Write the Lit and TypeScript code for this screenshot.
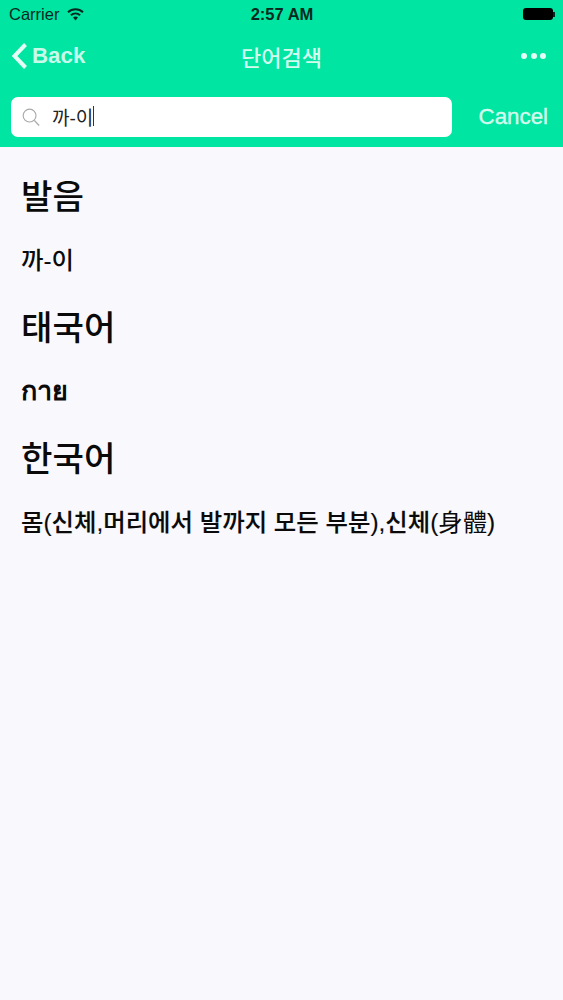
import { LitElement, html, css } from "lit";
import { customElement } from "lit/decorators.js";

@customElement("app-root")
export class AppRoot extends LitElement {
  static styles = css`
    :host { display: block; width: 563px; height: 1000px; background: #f9f8fc; font-family: "Liberation Sans", "Noto Sans CJK KR", sans-serif; overflow: hidden; color: #0a0a0a; }
    .header { background: #00e5a1; height: 147px; display: flex; flex-direction: column; }
    .status { height: 28px; display: grid; grid-template-columns: 1fr auto 1fr; align-items: center; padding: 0 8px 0 9px; color: #06281e; font-size: 16.5px; }
    .carrier { display: flex; align-items: center; gap: 8px; }
    .time { font-weight: 700; font-size: 16.5px; }
    .batt { justify-self: end; display: flex; align-items: center; }
    .batt i { display: block; width: 30px; height: 12px; background: #000; border-radius: 3px; }
    .batt b { display: block; width: 2px; height: 5px; background: #06281e; }
    .nav { height: 55px; display: grid; grid-template-columns: 1fr auto 1fr; align-items: center; padding: 0 11px; color: #d3fbee; }
    .back { display: flex; align-items: center; gap: 4px; font-size: 22.3px; font-weight: 700; color: #c8faea; }
    .title { font-size: 22px; font-weight: 500; }
    .more { justify-self: end; display: flex; gap: 3.5px; padding-right: 6px; }
    .more i { width: 6px; height: 6px; border-radius: 50%; background: #e4fdf5; }
    .searchrow { flex: 1; display: flex; align-items: flex-start; padding: 14px 15px 0 11px; }
    .field { width: 441px; height: 40px; background: #fff; border-radius: 7px; display: flex; align-items: center; padding: 0 10px 0 11px; gap: 12px; box-sizing: border-box; }
    .query { font-size: 19px; color: #222; display: flex; align-items: center; padding-bottom: 2px; }
    .caret { width: 1px; height: 20px; background: #333; }
    .cancel { margin-left: auto; font-size: 22.3px; color: #d3fbee; line-height: 40px; -webkit-text-stroke: 0.4px #d3fbee; }
    .content { padding: 18px 21px 0; display: flex; flex-direction: column; }
    h2 { margin: 0; font-size: 34.2px; font-weight: 500; line-height: 65.6px; }
    p { margin: -3px 0 3px; font-size: 24.4px; font-weight: 500; line-height: 65.6px; white-space: nowrap; }
    .strong { font-size: 24.4px; -webkit-text-stroke: 0.15px #0a0a0a; }
    .thai { font-size: 27px; font-weight: 700; }
    .hanja { font-weight: 400; -webkit-text-stroke: 0; }
  `;

  render() {
    return html`
      <div class="header">
        <div class="status">
          <div class="carrier">Carrier
            <svg width="17" height="13" viewBox="0 0 17 13"><path d="M8.5 12.5 L6 9.6 A4 4 0 0 1 11 9.6 Z" fill="#06281e"/><path d="M3.9 7.2 A7 7 0 0 1 13.1 7.2" fill="none" stroke="#06281e" stroke-width="2"/><path d="M1 4.2 A11 11 0 0 1 16 4.2" fill="none" stroke="#06281e" stroke-width="2"/></svg>
          </div>
          <div class="time">2:57 AM</div>
          <div class="batt"><i></i><b></b></div>
        </div>
        <div class="nav">
          <div class="back">
            <svg width="17" height="28" viewBox="0 0 17 28"><path d="M14.5 2.5 L3.5 14 L14.5 25.5" fill="none" stroke="#e4fdf5" stroke-width="4"/></svg>
            Back
          </div>
          <div class="title">단어검색</div>
          <div class="more"><i></i><i></i><i></i></div>
        </div>
        <div class="searchrow">
          <div class="field">
            <svg width="18" height="19" viewBox="0 0 19 20"><circle cx="8" cy="8" r="6.8" fill="none" stroke="#a9a9a9" stroke-width="1.2"/><path d="M13 13 L18 18.5" stroke="#a9a9a9" stroke-width="1.4" fill="none"/></svg>
            <div class="query">까-이<span class="caret"></span></div>
          </div>
          <div class="cancel">Cancel</div>
        </div>
      </div>
      <div class="content">
        <h2>발음</h2>
        <p>까-이</p>
        <h2>태국어</h2>
        <p class="thai">กาย</p>
        <h2>한국어</h2>
        <p class="strong">몸(신체,머리에서 발까지 모든 부분),신체(<span class="hanja">身體</span>)</p>
      </div>
    `;
  }
}
